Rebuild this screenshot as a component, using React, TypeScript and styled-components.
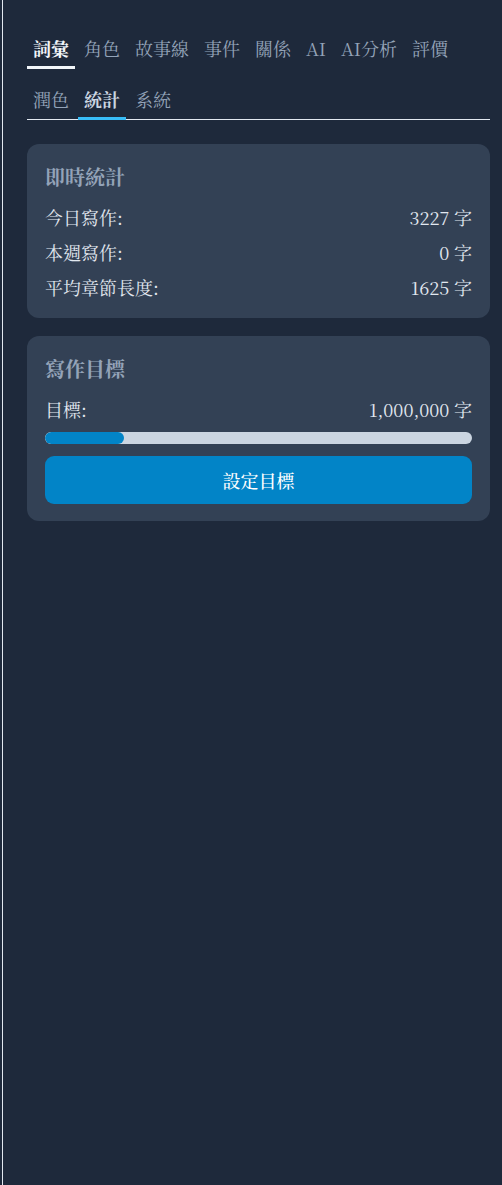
import React from "react";
import styled, { createGlobalStyle } from "styled-components";

const GlobalStyle = createGlobalStyle`
  html, body {
    margin: 0;
    padding: 0;
    background: #1e293b;
  }
  body {
    font-family: "Noto Serif CJK TC", "Liberation Serif", serif;
    font-size: 18px;
    color: #e2e8f0;
  }
  * { box-sizing: border-box; }
`;

const Panel = styled.div`
  margin-left: 2px;
  border-left: 1px solid #e2e8f0;
  min-height: 1185px;
  padding: 24px 12px 0 24px;
  background: #1e293b;
`;

const TabBar = styled.div`
  display: flex;
  flex-wrap: wrap;
  column-gap: 3px;
  row-gap: 7px;
  border-bottom: 1px solid #e2e8f0;
`;

type TabVariant = "plain" | "focus" | "selected";

const Tab = styled.button<{ $variant: TabVariant }>`
  appearance: none;
  background: transparent;
  border: none;
  border-bottom: 3px solid
    ${(p) =>
      p.$variant === "focus"
        ? "#f1f5f9"
        : p.$variant === "selected"
        ? "#38bdf8"
        : "transparent"};
  margin-bottom: -1px;
  padding: 12px 6px 6px;
  font-family: inherit;
  font-size: 18px;
  line-height: 24px;
  font-weight: ${(p) => (p.$variant === "plain" ? 400 : 700)};
  color: ${(p) =>
    p.$variant === "focus"
      ? "#f1f5f9"
      : p.$variant === "selected"
      ? "#cbd5e1"
      : "#94a3b8"};
  cursor: pointer;
  white-space: nowrap;
`;

const Card = styled.section<{ $first?: boolean }>`
  margin-top: ${(p) => (p.$first ? "24px" : "18px")};
  background: #334155;
  border-radius: 12px;
  padding: 18px 18px 17px;
`;

const CardTitle = styled.h3`
  margin: 0 0 12px;
  font-size: 20px;
  line-height: 30px;
  font-weight: 700;
  color: #94a3b8;
`;

const StatList = styled.div`
  display: flex;
  flex-direction: column;
  gap: 8px;
`;

const StatRow = styled.div`
  display: flex;
  justify-content: space-between;
  align-items: center;
  font-size: 18px;
  line-height: 27px;
  color: #e2e8f0;
`;

const Label = styled.span`
  color: #e2e8f0;
`;

const Value = styled.span`
  color: #e2e8f0;
`;

const ProgressTrack = styled.div`
  margin-top: 9px;
  height: 12px;
  border-radius: 6px;
  background: #cbd5e1;
  overflow: hidden;
`;

const ProgressFill = styled.div`
  height: 100%;
  border-radius: 6px;
  background: #0284c7;
`;

const PrimaryButton = styled.button`
  appearance: none;
  display: block;
  width: 100%;
  margin-top: 12px;
  height: 48px;
  border: none;
  border-radius: 9px;
  background: #0284c7;
  color: #ffffff;
  font-family: inherit;
  font-size: 18px;
  font-weight: 500;
  cursor: pointer;
`;

const tabs: { label: string; variant: TabVariant }[] = [
  { label: "詞彙", variant: "focus" },
  { label: "角色", variant: "plain" },
  { label: "故事線", variant: "plain" },
  { label: "事件", variant: "plain" },
  { label: "關係", variant: "plain" },
  { label: "AI", variant: "plain" },
  { label: "AI分析", variant: "plain" },
  { label: "評價", variant: "plain" },
  { label: "潤色", variant: "plain" },
  { label: "統計", variant: "selected" },
  { label: "系統", variant: "plain" },
];

const stats = [
  { label: "今日寫作:", value: "3227 字" },
  { label: "本週寫作:", value: "0 字" },
  { label: "平均章節長度:", value: "1625 字" },
];

export default function App() {
  const progress = 18.5;
  return (
    <>
      <GlobalStyle />
      <Panel>
        <TabBar>
          {tabs.map((t) => (
            <Tab key={t.label} $variant={t.variant}>
              {t.label}
            </Tab>
          ))}
        </TabBar>

        <Card $first>
          <CardTitle>即時統計</CardTitle>
          <StatList>
            {stats.map((s) => (
              <StatRow key={s.label}>
                <Label>{s.label}</Label>
                <Value>{s.value}</Value>
              </StatRow>
            ))}
          </StatList>
        </Card>

        <Card>
          <CardTitle>寫作目標</CardTitle>
          <StatRow>
            <Label>目標:</Label>
            <Value>1,000,000 字</Value>
          </StatRow>
          <ProgressTrack>
            <ProgressFill style={{ width: `${progress}%` }} />
          </ProgressTrack>
          <PrimaryButton>設定目標</PrimaryButton>
        </Card>
      </Panel>
    </>
  );
}
